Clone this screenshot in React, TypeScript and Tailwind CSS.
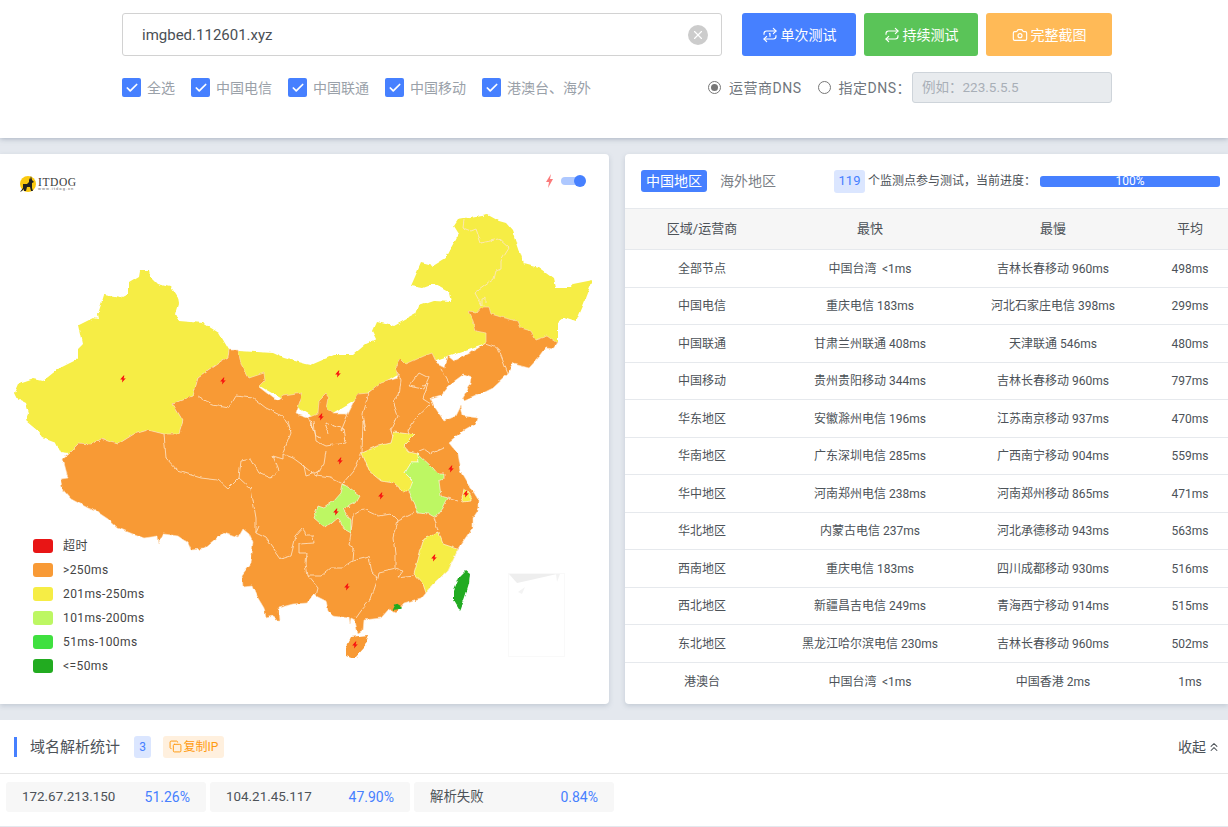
import { Camera, ChevronsUp, Copy, Repeat, Repeat1, X, Check } from 'lucide-react';

const ORANGE = '#f89a36';
const YELLOW = '#f6ed45';
const LIME = '#bdf763';
const GREEN = '#22ab20';

const xinjiang =
  '139,270 148,270 149,275 157,283 170,286 177,297 178,303 175,313 178,320 202,322 218,332 228,349 227,357 217,363 207,370 197,377 192,395 172,403 182,420 178,433 163,433 147,429 133,433 117,443 100,438 90,444 78,443 68,453 60,452 55,442 42,437 37,430 25,420 28,413 25,402 17,398 14,392 18,383 33,378 42,380 57,368 77,358 77,348 82,343 78,324 92,317 98,318 97,313 103,294 120,297 128,293 128,282 138,276';

const north =
  '228,349 238,350 272,352 283,357 305,363 310,364 333,354 352,354 365,343 376,338 372,330 376,321 393,325 415,313 418,305 433,300 451,301 449,292 433,283 422,287 410,285 420,262 432,265 445,257 458,233 453,225 457,219 487,214 498,220 505,222 512,230 523,263 538,267 553,278 555,287 570,287 572,283 592,279 587,292 582,305 575,321 563,317 557,322 557,342 485,343 400,372 320,420 250,380';

const mainland =
  '62,458 68,453 78,443 90,444 100,438 117,443 133,433 147,429 163,433 178,433 182,420 172,403 192,395 197,377 207,370 217,363 227,357 228,349 237,349 240,363 248,377 263,372 264,380 258,386 272,397 277,400 283,395 302,392 295,413 307,417 317,413 318,400 325,393 328,397 326,408 333,413 347,413 357,393 368,392 380,382 397,377 395,367 400,358 405,363 423,355 431,352 436,363 444,367 447,355 453,360 473,350 485,343 485,332 475,330 472,320 468,311 477,312 482,306 488,306 490,313 500,316 517,320 520,327 530,330 535,339 547,335 557,342 553,348 545,347 540,354 528,367 513,363 507,373 492,387 482,392 463,400 462,397 470,383 471,377 463,374 448,385 440,395 430,398 433,405 443,420 455,415 460,405 462,415 477,417 475,423 463,430 448,442 457,453 460,470 470,487 478,500 478,508 472,517 472,527 463,540 458,547 455,553 447,570 433,583 425,592 420,598 403,603 395,612 388,608 380,617 363,619 362,630 357,633 354,620 350,618 349,623 348,617 332,615 327,610 325,600 315,595 313,593 307,602 293,603 278,607 279,620 275,620 273,615 265,617 263,607 257,597 252,585 242,586 241,575 250,563 252,542 248,533 242,528 237,537 223,532 207,545 203,548 190,549 187,542 177,535 163,533 158,543 157,535 143,537 132,533 117,527 107,518 95,510 87,507 70,498 63,490 60,478 67,477';

const hainan = '345,647 350,637 368,635 363,647 353,658 345,655';
const henan =
  '361,452 377,445 390,442 393,431 408,433 414,434 403,445 408,451 417,453 418,462 410,462 404,472 412,480 410,488 403,491 393,482 380,480 368,470';
const anhui =
  '417,453 432,467 437,473 443,473 443,478 438,480 440,495 447,497 442,507 435,517 428,513 417,512 413,502 408,490 412,480 404,472 410,462 418,462';
const chongqing =
  '342,483 350,488 359,495 355,502 342,508 350,520 350,532 343,528 337,517 325,527 320,523 313,517 317,505 323,507 333,500 340,492';
const shanghai = '463,488 470,492 470,500 463,501 461,497';
const fujian =
  '438,532 442,543 457,548 454,555 447,570 433,583 425,592 422,583 413,573 418,555 423,538';
const taiwan = '465,570 469,573 468,583 465,593 460,608 459,610 453,600 453,590 458,577';
const hongkong = '395,604 400,607 393,608';

const borders = [
  '463,219 462,227 470,230 475,228 480,242 498,238 508,247 500,260 500,268 495,270 493,278 474,292 481,305',
  '481,305 481,298 485,297 485,302',
  '485,343 497,347 502,360 507,373',
  '440,368 448,382',
  '395,367 400,380 398,395 392,400 397,415 390,430 395,445',
  '368,392 362,413 365,430 362,420 361,452',
  '408,385 418,372 428,377 423,388 408,385',
  '422,385 427,383 422,398 430,403 415,417 407,430 408,433',
  '418,450 423,448 430,453 443,447',
  '447,497 457,500',
  '433,517 437,530',
  '352,515 363,508 378,515 390,513 397,520 413,512',
  '397,520 393,537 395,553 395,568',
  '378,572 395,568 402,570 397,577 413,575',
  '352,515 350,532 348,545 353,548 352,560 342,567 330,567 320,575 307,575 305,563 306,552 298,552 298,543 313,542 312,535 305,535 302,527 295,535 290,555 280,558 265,537 255,532 258,525',
  '352,560 368,556 371,572 377,577 378,572',
  '377,577 370,598 360,610 355,617',
  '307,575 317,587 315,595',
  '361,452 353,470 342,483',
  '325,450 323,463 315,475 330,477 342,483',
  '313,420 315,440 325,445 345,442 343,428 325,422 328,433',
  '238,477 250,488 255,517 255,532',
  '163,433 165,457 177,470 200,477 217,479 227,488 238,477',
  '238,477 240,460 250,458 258,472 270,477 278,470 272,455 282,458 282,453 292,457 303,465 305,475 320,470',
  '287,420 290,432 282,452',
  '197,395 212,404 228,407 235,395 252,397 265,407 282,415 290,430',
  '307,417 313,430 310,420 315,435 320,437',
  '315,475 300,463',
  '347,413 340,430 343,428',
];

const bolts: [number, number][] = [
  [123, 379],
  [223, 381],
  [338, 374],
  [321, 417],
  [340, 461],
  [451, 469],
  [381, 496],
  [466, 494],
  [336, 512],
  [434, 558],
  [347, 587],
  [355, 645],
];

const legend = [
  ['#e81515', '超时'],
  [ORANGE, '>250ms'],
  [YELLOW, '201ms-250ms'],
  [LIME, '101ms-200ms'],
  ['#3fe03f', '51ms-100ms'],
  [GREEN, '<=50ms'],
];

const rows = [
  ['全部节点', '中国台湾 \u2009<1ms', '吉林长春移动 960ms', '498ms'],
  ['中国电信', '重庆电信 183ms', '河北石家庄电信 398ms', '299ms'],
  ['中国联通', '甘肃兰州联通 408ms', '天津联通 546ms', '480ms'],
  ['中国移动', '贵州贵阳移动 344ms', '吉林长春移动 960ms', '797ms'],
  ['华东地区', '安徽滁州电信 196ms', '江苏南京移动 937ms', '470ms'],
  ['华南地区', '广东深圳电信 285ms', '广西南宁移动 904ms', '559ms'],
  ['华中地区', '河南郑州电信 238ms', '河南郑州移动 865ms', '471ms'],
  ['华北地区', '内蒙古电信 237ms', '河北承德移动 943ms', '563ms'],
  ['西南地区', '重庆电信 183ms', '四川成都移动 930ms', '516ms'],
  ['西北地区', '新疆昌吉电信 249ms', '青海西宁移动 914ms', '515ms'],
  ['东北地区', '黑龙江哈尔滨电信 230ms', '吉林长春移动 960ms', '502ms'],
  ['港澳台', '中国台湾 \u2009<1ms', '中国香港 2ms', '1ms'],
];

const checks = [
  ['全选', 'w-[69px]'],
  ['中国电信', 'w-[97px]'],
  ['中国联通', 'w-[97px]'],
  ['中国移动', 'w-[97px]'],
  ['港澳台、海外', 'w-[112px]'],
];

const stats = [
  ['172.67.213.150', '51.26%'],
  ['104.21.45.117', '47.90%'],
  ['解析失败', '0.84%'],
];

function ChinaMap() {
  return (
    <svg viewBox="0 154 609 550" className="block w-[609px] h-[550px]">
      <defs>
        <filter id="rough" x="0" y="0" width="100%" height="100%" filterUnits="objectBoundingBox">
          <feTurbulence type="turbulence" baseFrequency="0.12" numOctaves="2" seed="4" />
          <feDisplacementMap in="SourceGraphic" scale="3" xChannelSelector="R" yChannelSelector="G" />
        </filter>
      </defs>
      <g filter="url(#rough)">
        <polygon points={north} fill={YELLOW} />
        <polygon points={xinjiang} fill={YELLOW} />
        <polygon points={mainland} fill={ORANGE} stroke="#fde3c4" strokeWidth="0.6" />
        <polygon points={hainan} fill={ORANGE} />
        <g fill="none" stroke="#fde6cc" strokeWidth="0.8" strokeLinejoin="round">
          {borders.map((b) => (
            <polyline key={b} points={b} />
          ))}
        </g>
        <g stroke="#fff" strokeWidth="0.7" strokeOpacity="0.8">
          <polygon points={henan} fill={YELLOW} />
          <polygon points={anhui} fill={LIME} />
          <polygon points={chongqing} fill={LIME} />
          <polygon points={shanghai} fill={YELLOW} />
          <polygon points={fujian} fill={YELLOW} />
        </g>
        <polygon points={taiwan} fill={GREEN} />
        <polygon points={hongkong} fill={GREEN} stroke={GREEN} strokeWidth="1.5" />
      </g>
      {/* south china sea inset */}
      <rect x="508.5" y="573.5" width="56" height="83" fill="#fff" stroke="#f9f9f9" />
      <polygon points="509,574 557,574 535,579 517,583" fill="#eeeeee" />
      <polygon points="518,592 525,587 522,594" fill="#f3f3f3" />
      <polygon points="556,574 560,574 557,582" fill="#f3f3f3" />
      {bolts.map(([x, y]) => (
        <polygon
          key={x + '-' + y}
          transform={`translate(${x} ${y})`}
          points="0.6,-3.6 -2.8,0.6 -0.6,0.4 -1,3.6 2.8,-0.8 0.6,-0.6 1.4,-3.6"
          fill="#f81010"
        />
      ))}
    </svg>
  );
}

function Logo() {
  return (
    <div className="absolute left-[19px] top-[21px] flex items-center gap-[1px]">
      <svg width="18" height="18" viewBox="0 0 18 18">
        <circle cx="9" cy="9" r="8" fill="#fbc90f" />
        <polygon
          points="1,17 4,13 4,9 8,9 10,7 10,3 11,5 12,1 13,5 15,7 13,8 13,13 14,16 12,16 11,12 8,12 7,16 5,16 5,14 3,16"
          fill="#222"
        />
      </svg>
      <div className="flex flex-col leading-none">
        <span className="text-[11.5px] leading-[10px] text-[#3a3a3a] tracking-[0.6px] font-['Liberation_Serif',serif]">
          ITDOG
        </span>
        <span className="text-[4px] leading-[4px] text-[#666] tracking-[1px]">www.itdog.cn</span>
      </div>
    </div>
  );
}

function ActionButton({ color, icon, label, width }: { color: string; icon: React.ReactNode; label: string; width: string }) {
  return (
    <button className={`${color} ${width} h-[43px] rounded-[3px] text-white text-sm flex items-center justify-center gap-[3px]`}>
      {icon}
      {label}
    </button>
  );
}

export default function App() {
  return (
    <div className="w-[1228px] h-[827px] overflow-hidden bg-[#e4e8ee] text-[#4c5258] font-['Roboto','Noto_Sans_CJK_SC',sans-serif]">
      {/* Test form */}
      <div className="h-[138px] bg-white shadow-[0_1px_5px_rgba(120,135,155,0.55)] relative pt-[13px] pl-[122px]">
        <div className="w-[990px] flex justify-between">
          <div className="w-[600px] h-[43px] border border-[#d2d2d2] rounded-[3px] pl-[19px] pr-[13px] flex items-center justify-between">
            <span className="text-[15px] pt-px text-[#4a4f55]">imgbed.112601.xyz</span>
            <span className="w-5 h-5 rounded-full bg-[#cccccc] flex items-center justify-center">
              <X size={14} color="#fff" strokeWidth={2} />
            </span>
          </div>
          <div className="flex gap-2">
            <ActionButton color="bg-[#4680ff]" width="w-[114px]" label="单次测试" icon={<Repeat1 size={16} strokeWidth={1.7} />} />
            <ActionButton color="bg-[#5ac458]" width="w-[114px]" label="持续测试" icon={<Repeat size={16} strokeWidth={1.7} />} />
            <ActionButton color="bg-[#ffba57]" width="w-[126px]" label="完整截图" icon={<Camera size={16} strokeWidth={1.7} />} />
          </div>
        </div>
        <div className="w-[990px] mt-4 flex justify-between items-center">
          <div className="flex">
            {checks.map(([label, w]) => (
              <div key={label} className={`${w} flex items-center gap-[6px] text-sm text-[#9aa1a9]`}>
                <span className="w-[19px] h-[19px] shrink-0 rounded-[2px] bg-[#4680ff] flex items-center justify-center">
                  <Check size={14} color="#fff" strokeWidth={3} />
                </span>
                {label}
              </div>
            ))}
          </div>
          <div className="flex items-center text-sm text-[#70767d] tracking-[0.5px]">
            <span className="w-[13px] h-[13px] rounded-full border border-[#777] flex items-center justify-center mr-[8px]">
              <span className="w-[7px] h-[7px] rounded-full bg-[#777]" />
            </span>
            <span>运营商DNS</span>
            <span className="w-[13px] h-[13px] rounded-full border border-[#777] ml-[16px] mr-[8px]" />
            <span>指定DNS{'\uFF1A'}</span>
            <div className="w-[200px] h-[31px] ml-[1px] bg-[#e8ebee] border border-[#ced4da] rounded-[3px] pl-[9px] flex items-center text-[13.5px] tracking-normal text-[#a8afb7]">
              例如{'\uFF1A'}223.5.5.5
            </div>
          </div>
        </div>
      </div>

      {/* Map and table */}
      <div className="mt-4 flex gap-4 h-[550px]">
        <div className="relative w-[609px] shrink-0 bg-white rounded-r-[4px] shadow-[0_2px_5px_rgba(120,135,155,0.3)]">
          <ChinaMap />
          <Logo />
          <div className="absolute left-[545px] top-[20px] flex items-center gap-[7px]">
            <svg width="9" height="14" viewBox="0 0 9 14">
              <polygon points="6,0 1,8 4,8 3,14 8,5 5,5" fill="#fb7b7b" />
            </svg>
            <span className="relative w-5 h-2 rounded-full bg-[#aec8ff]">
              <span className="absolute right-[-5px] top-[-2px] w-3 h-3 rounded-full bg-[#4680ff]" />
            </span>
          </div>
          <div className="absolute left-[33px] top-[385px] flex flex-col gap-[10px]">
            {legend.map(([c, t]) => (
              <div key={t} className="h-[14px] flex items-center gap-[10px] text-xs text-[#444] tracking-[0.4px]">
                <span className="w-5 h-[14px] rounded-[3px]" style={{ backgroundColor: c }} />
                {t}
              </div>
            ))}
          </div>
        </div>

        <div className="w-[603px] shrink-0 bg-white rounded-l-[4px] shadow-[0_2px_5px_rgba(120,135,155,0.3)] overflow-hidden">
          <div className="h-[54px] pl-4 flex items-center">
            <span className="h-[22px] px-[5px] rounded-[3px] bg-[#4680ff] text-white text-sm flex items-center">中国地区</span>
            <span className="ml-[13px] text-sm text-[#7b8086]">海外地区</span>
            <span className="ml-[58px] w-[31px] h-[23px] rounded-[3px] bg-[#dbe6ff] text-[#4680ff] text-[13px] flex items-center justify-center">119</span>
            <span className="ml-[3px] w-[172px] text-xs text-[#4c5258] whitespace-nowrap">个监测点参与测试{'\uFF0C'}当前进度{'\uFF1A'}</span>
            <div className="w-[180px] h-[11px] rounded-[3px] bg-[#4680ff] text-white text-xs leading-[11px] text-center">100%</div>
          </div>
          <div className="h-[42px] bg-[#f6f6f6] border-y border-[#e6e9ed] grid grid-cols-[154px_182px_184px_90px] items-center text-center text-[13px]">
            <span>区域/运营商</span>
            <span>最快</span>
            <span>最慢</span>
            <span>平均</span>
          </div>
          {rows.map((r) => (
            <div key={r[0]} className="h-[37.5px] pt-px border-b border-[#e6e9ed] last:border-b-0 grid grid-cols-[154px_182px_184px_90px] items-center text-center text-xs">
              {r.map((c, i) => (
                <span key={i}>{c}</span>
              ))}
            </div>
          ))}
        </div>
      </div>

      {/* DNS stats */}
      <div className="mt-4 h-[106px] bg-white">
        <div className="h-[54px] pl-[14px] pr-[7px] border-b border-[#e6e6e6] flex items-center">
          <span className="w-[3px] h-5 bg-[#4680ff]" />
          <span className="ml-[13px] pt-px text-[15px] text-[#4c5258]">域名解析统计</span>
          <span className="ml-[14px] w-[17px] h-[22px] rounded-[3px] bg-[#dbe6ff] text-[#4680ff] text-xs flex items-center justify-center">3</span>
          <span className="ml-3 w-[61px] h-[22px] rounded-[3px] bg-[#fff0de] text-[#ff9a10] text-xs flex items-center justify-center gap-[2px]">
            <Copy size={13} strokeWidth={1.8} />
            复制IP
          </span>
          <span className="ml-auto text-sm flex items-center gap-[1px]">
            收起
            <ChevronsUp size={14} strokeWidth={1.8} />
          </span>
        </div>
        <div className="pt-2 pl-[6px] flex gap-1">
          {stats.map(([ip, pct]) => (
            <div key={ip} className="w-[200px] h-[30px] rounded-[3px] bg-[#f7f7f7] px-4 flex items-center justify-between text-[13.4px]">
              <span>{ip}</span>
              <span className="text-sm text-[#4680ff]">{pct}</span>
            </div>
          ))}
        </div>
      </div>
    </div>
  );
}
